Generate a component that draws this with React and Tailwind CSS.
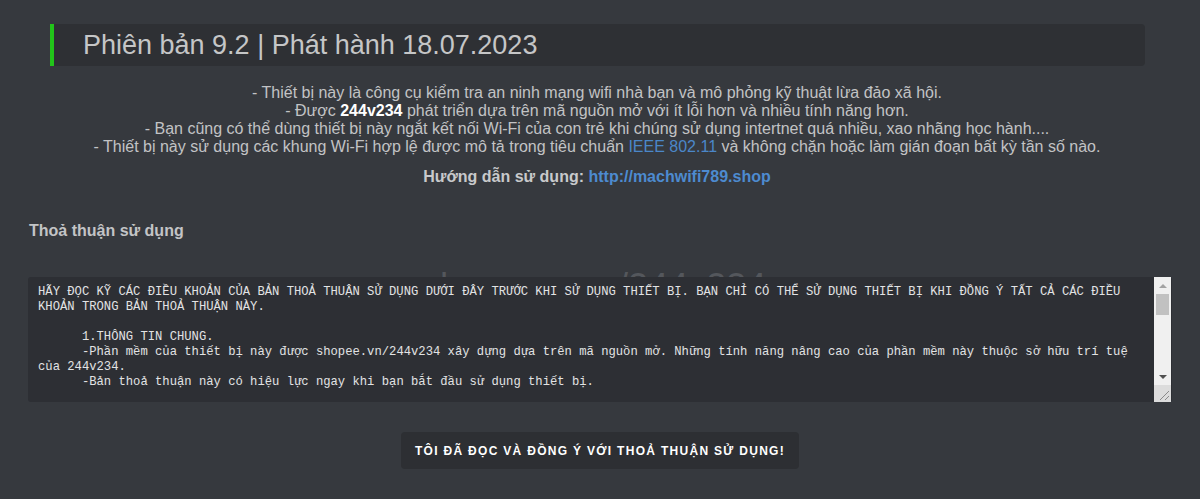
import React from "react";

const terms = `HÃY ĐỌC KỸ CÁC ĐIỀU KHOẢN CỦA BẢN THOẢ THUẬN SỬ DỤNG DƯỚI ĐÂY TRƯỚC KHI SỬ DỤNG THIẾT BỊ. BẠN CHỈ CÓ THỂ SỬ DỤNG THIẾT BỊ KHI ĐỒNG Ý TẤT CẢ CÁC ĐIỀU KHOẢN TRONG BẢN THOẢ THUẬN NÀY.

      1.THÔNG TIN CHUNG.
      -Phần mềm của thiết bị này được shopee.vn/244v234 xây dựng dựa trên mã nguồn mở. Những tính năng nâng cao của phần mềm này thuộc sở hữu trí tuệ của 244v234.
      -Bản thoả thuận này có hiệu lực ngay khi bạn bắt đầu sử dụng thiết bị.

      2.QUYỀN VÀ TRÁCH NHIỆM CỦA NGƯỜI DÙNG.
      -Người dùng chỉ được sử dụng thiết bị để kiểm tra mạng wifi của chính mình.
      -Người dùng tự chịu trách nhiệm với mọi hành vi sử dụng thiết bị sai mục đích.
      -Không sử dụng thiết bị để xâm nhập, phá hoại hệ thống mạng của người khác.

      3.MIỄN TRỪ TRÁCH NHIỆM.
      -244v234 không chịu trách nhiệm với bất kỳ thiệt hại nào phát sinh từ việc sử dụng thiết bị.
      -Thiết bị được cung cấp "như hiện có" và không kèm theo bất kỳ bảo đảm nào.

      4.ĐIỀU KHOẢN CUỐI CÙNG.
      -Bằng việc sử dụng thiết bị, bạn xác nhận đã đọc, hiểu và đồng ý với toàn bộ các điều khoản trên.`;

// textarea scrollbar drawn by hand, headless browser hides the native one
const FakeScrollbar = () => (
  <div className="pointer-events-none absolute bottom-0 right-[1px] top-0 z-20 flex w-[17px] flex-col bg-[#f0f0f0]">
    <div className="flex h-[17px] items-center justify-center">
      <div className="h-0 w-0 border-x-[4px] border-b-[4px] border-x-transparent border-b-[#a3a3a3]" />
    </div>
    <div className="flex-1 px-[2px]">
      <div className="h-[21px] w-full bg-[#c1c1c1]" />
    </div>
    <div className="flex h-[17px] items-center justify-center">
      <div className="h-0 w-0 border-x-[4px] border-t-[4px] border-x-transparent border-t-[#505050]" />
    </div>
    <div className="h-[17px] bg-[#dcdcdc]">
      <svg width="17" height="17" viewBox="0 0 17 17">
        <path d="M15 6 L6 15 M15 11 L11 15" stroke="#8a8a8a" strokeWidth="1" />
      </svg>
    </div>
  </div>
);

const App = () => {
  return (
    <div
      className="min-h-[499px] w-full bg-[#36393e] pt-[24px] text-[#c3c4c6]"
      style={{ fontFamily: '"Liberation Sans", Arial, sans-serif' }}
    >
      <div className="ml-[50px] mr-[55px] flex h-[42px] items-center rounded-r-[4px] border-l-[4px] border-[#22c41a] bg-[#2e3034] pl-[29px]">
        <h1 className="text-[27px] leading-none text-[#c5c6c7]">
          Phiên bản 9.2 | Phát hành 18.07.2023
        </h1>
      </div>

      <div className="mt-[18px] pr-[6px] text-center text-[16px] leading-[18px] text-[#c2c3c5]">
        <p>- Thiết bị này là công cụ kiểm tra an ninh mạng wifi nhà bạn và mô phỏng kỹ thuật lừa đảo xã hội.</p>
        <p>
          - Được <span className="font-bold text-white">244v234</span> phát triển dựa trên mã nguồn mở với ít lỗi hơn và nhiều tính năng hơn.
        </p>
        <p>- Bạn cũng có thể dùng thiết bị này ngắt kết nối Wi-Fi của con trẻ khi chúng sử dụng intertnet quá nhiều, xao nhãng học hành....</p>
        <p>
          - Thiết bị này sử dụng các khung Wi-Fi hợp lệ được mô tả trong tiêu chuẩn{" "}
          <a className="text-[#4b87c9]">IEEE 802.11</a> và không chặn hoặc làm gián đoạn bất kỳ tần số nào.
        </p>
        <p className="mt-[12px] font-bold text-[#c8c9cb]">
          Hướng dẫn sử dụng: <a className="text-[#4d8bd0]">http://machwifi789.shop</a>
        </p>
      </div>

      <h2 className="ml-[29px] mt-[36px] text-[16px] font-bold leading-[18px] text-[#c3c4c6]">
        Thoả thuận sử dụng
      </h2>

      <div className="relative mx-[28px] mt-[37px]">
        <div className="pointer-events-none absolute left-[394px] top-[-8px] whitespace-nowrap text-[36px] leading-none text-[#54575c]">
          shopee.com/244v234
        </div>
        <textarea
          readOnly
          defaultValue={terms}
          className="relative z-10 block h-[125px] w-full resize-none overflow-hidden rounded-[3px] bg-[#2d2f34] pb-[7px] pl-[10px] pr-[28px] pt-[8px] text-[12.2px] leading-[15px] text-[#e2e3e4] outline-none"
          style={{ fontFamily: '"Liberation Mono", "DejaVu Sans Mono", monospace' }}
        />
        <FakeScrollbar />
      </div>

      <div className="mt-[30px] flex justify-center pb-[30px]">
        <button className="h-[37px] w-[398px] whitespace-nowrap rounded-[4px] bg-[#2d2f33] text-[12px] font-bold tracking-[1.3px] text-white">
          TÔI ĐÃ ĐỌC VÀ ĐỒNG Ý VỚI THOẢ THUẬN SỬ DỤNG!
        </button>
      </div>
    </div>
  );
};

export default App;
